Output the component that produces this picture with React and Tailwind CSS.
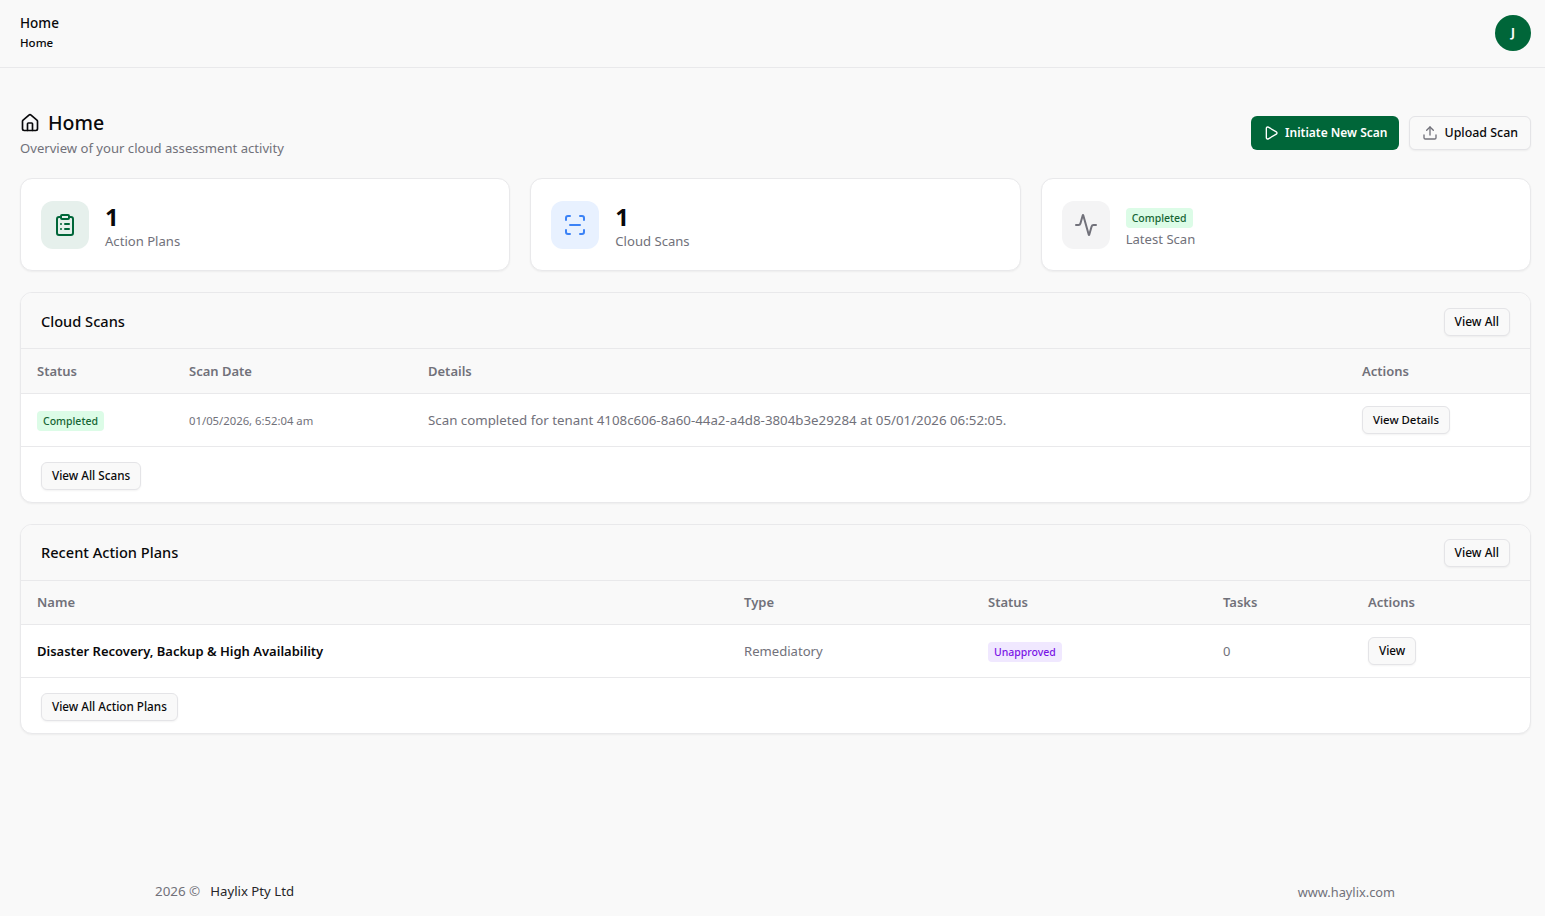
import React from 'react';
import { House, ClipboardList, ScanLine, Activity, Play, Upload } from 'lucide-react';

const Button = ({ children, className = 'text-[11.7px]' }) => (
  <button className={`h-7 px-[10px] bg-[#f9f9f9] border border-[#e4e4e7] rounded-md shadow-xs font-medium text-[#09090b] ${className}`}>
    {children}
  </button>
);

const StatCard = ({ iconBg, icon, children }) => (
  <div className="flex-1 h-[93px] bg-white border border-[#e9e9eb] rounded-xl shadow-xs flex items-center gap-4 px-5">
    <div className={`w-12 h-12 rounded-xl flex items-center justify-center ${iconBg}`}>{icon}</div>
    <div className="pt-[4px]">{children}</div>
  </div>
);

const Badge = ({ className, children }) => (
  <span className={`inline-block align-middle px-[6px] h-5 leading-5 rounded text-[10.5px] font-medium ${className}`}>{children}</span>
);

const Th = ({ children, className = 'pt-0.5' }) => <th className={`h-[44px] px-4 text-left text-[13px] font-semibold text-[#71717a] ${className}`}>{children}</th>;

const Section = ({ title, footer, children }) => (
  <section className="bg-white border border-[#e9e9eb] rounded-xl shadow-xs overflow-hidden">
    <div className="h-[56px] pt-[2px] bg-[#f9f9f9] border-b border-[#e9e9eb] flex items-center justify-between px-5">
      <h2 className="text-[14.6px] font-medium text-[#09090b]">{title}</h2>
      <Button className="text-xs">View All</Button>
    </div>
    {children}
    <div className="h-[55px] pt-[3px] flex items-center px-5">
      <Button>{footer}</Button>
    </div>
  </section>
);

export default function App() {
  return (
    <div className="min-h-[916px] bg-[#f9f9f9] flex flex-col font-['Noto_Sans',sans-serif] text-[#09090b]">
      <header className="h-[68px] border-b border-[#e9e9eb] flex items-center justify-between pl-5 pr-[14px]">
        <div className="-mt-[1px]">
          <div className="text-[13.5px] font-medium leading-[18px]">Home</div>
          <div className="text-[11.5px] font-medium leading-[20px] mt-px">Home</div>
        </div>
        <div className="w-9 h-9 rounded-full bg-[#006639] text-white text-xs font-bold flex items-center justify-center -mt-[2px]">J</div>
      </header>

      <main className="flex-1 px-[14px] pl-5 pt-[41px]">
        <div className="flex items-center justify-between">
          <div>
            <h1 className="flex items-center gap-2 text-[19.5px] font-medium leading-7">
              <House size={20} strokeWidth={2} />
              Home
            </h1>
            <p className="text-[13.1px] text-[#71717a] leading-[22px]">Overview of your cloud assessment activity</p>
          </div>
          <div className="flex gap-[10px] -mt-[3px]">
            <button className="h-[34px] pl-3 pr-[11px] bg-[#006639] rounded-md text-white text-xs font-semibold flex items-center gap-[6px]">
              <Play size={16} />
              <span className="mt-px">Initiate New Scan</span>
            </button>
            <button className="h-[34px] pl-3 pr-3 bg-[#f9f9f9] border border-[#e4e4e7] rounded-md shadow-xs text-[12.4px] font-medium flex items-center gap-[7px]">
              <Upload size={16} className="text-[#71717a]" />
              <span className="mt-px">Upload Scan</span>
            </button>
          </div>
        </div>

        <div className="flex gap-5 mt-[19px]">
          <StatCard iconBg="bg-[#e6f0ec]" icon={<ClipboardList size={24} className="text-[#006639]" />}>
            <div className="text-2xl font-bold leading-7">1</div>
            <div className="text-[13.1px] text-[#71717a] leading-5">Action Plans</div>
          </StatCard>
          <StatCard iconBg="bg-[#e8f1ff]" icon={<ScanLine size={24} className="text-[#3b82f6]" />}>
            <div className="text-2xl font-bold leading-7">1</div>
            <div className="text-[13.1px] text-[#71717a] leading-5">Cloud Scans</div>
          </StatCard>
          <StatCard iconBg="bg-[#f4f4f5]" icon={<Activity size={24} className="text-[#71717a]" />}>
            <Badge className="bg-[#dcfce7] text-[#166534]">Completed</Badge>
            <div className="text-[13.1px] text-[#71717a] leading-5">Latest Scan</div>
          </StatCard>
        </div>

        <div className="flex flex-col gap-[21px] mt-[21px]">
          <Section title="Cloud Scans" footer="View All Scans">
            <table className="w-full table-fixed border-collapse">
              <colgroup>
                <col className="w-[152px]" />
                <col className="w-[239px]" />
                <col />
                <col className="w-[184px]" />
              </colgroup>
              <thead className="bg-[#f9f9f9]">
                <tr className="border-b border-[#e9e9eb]">
                  <Th>Status</Th><Th>Scan Date</Th><Th>Details</Th><Th>Actions</Th>
                </tr>
              </thead>
              <tbody>
                <tr className="border-b border-[#e9e9eb] h-[53px]">
                  <td className="px-4"><Badge className="bg-[#dcfce7] text-[#166534]">Completed</Badge></td>
                  <td className="px-4 pt-1 text-[11.3px] text-[#71717a]">01/05/2026, 6:52:04 am</td>
                  <td className="px-4 pt-0.5 text-[13.3px] text-[#71717a] whitespace-nowrap">Scan completed for tenant 4108c606-8a60-44a2-a4d8-3804b3e29284 at 05/01/2026 06:52:05.</td>
                  <td className="px-4"><Button className="text-[11.4px]">View Details</Button></td>
                </tr>
              </tbody>
            </table>
          </Section>

          <Section title="Recent Action Plans" footer="View All Action Plans">
            <table className="w-full table-fixed border-collapse">
              <colgroup>
                <col className="w-[707px]" />
                <col className="w-[244px]" />
                <col className="w-[235px]" />
                <col className="w-[145px]" />
                <col />
              </colgroup>
              <thead className="bg-[#f9f9f9]">
                <tr className="border-b border-[#e9e9eb]">
                  <Th className="">Name</Th><Th className="">Type</Th><Th className="">Status</Th><Th className="">Tasks</Th><Th className="">Actions</Th>
                </tr>
              </thead>
              <tbody>
                <tr className="border-b border-[#e9e9eb] h-[53px]">
                  <td className="px-4 pt-0.5 text-[13px] font-semibold">Disaster Recovery, Backup &amp; High Availability</td>
                  <td className="px-4 pt-0.5 text-[13.1px] text-[#71717a]">Remediatory</td>
                  <td className="px-4 pb-0.5"><Badge className="bg-[#f0e8ff] text-[#7a14e6]">Unapproved</Badge></td>
                  <td className="px-4 pt-0.5 text-[13px] text-[#71717a]">0</td>
                  <td className="px-4"><Button>View</Button></td>
                </tr>
              </tbody>
            </table>
          </Section>
        </div>
      </main>

      <footer className="h-[34px] pl-[155px] pr-[150px] flex items-start justify-between leading-5 text-[13.4px] text-[#71717a]">
        <div className="-mt-px">2026 ©&nbsp;&nbsp;<span className="text-[13.2px] text-[#27272a] ml-[3px]">Haylix Pty Ltd</span></div>
        <div className="text-[12.8px]">www.haylix.com</div>
      </footer>
    </div>
  );
}
